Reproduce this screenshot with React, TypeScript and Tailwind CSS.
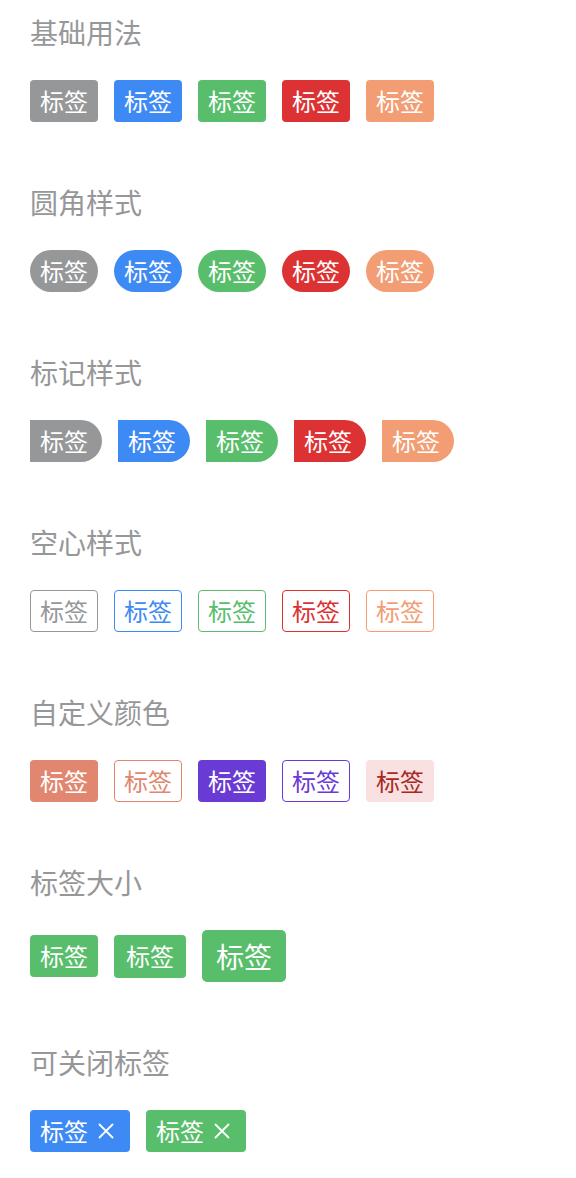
import React from 'react';

const font = { fontFamily: '"Noto Sans CJK SC", "Noto Sans", sans-serif' };

const Title: React.FC<{ children: React.ReactNode }> = ({ children }) => (
  <div className="text-[28px] leading-[40px] text-[#969799]">{children}</div>
);

const base = 'inline-flex items-center justify-center h-[42px] text-[24px] leading-none text-white';

const CloseIcon = () => (
  <svg width="16" height="16" viewBox="0 0 16 16" className="ml-[10px]">
    <path d="M1.5 1.5 L14.5 14.5 M14.5 1.5 L1.5 14.5" stroke="currentColor" strokeWidth="1.8" strokeLinecap="round" fill="none" />
  </svg>
);

const fills = ['bg-[#969799]', 'bg-[#3d8af5]', 'bg-[#58be6b]', 'bg-[#dc3233]', 'bg-[#f29d73]'];
const plains = [
  'border-[#969799] text-[#969799]',
  'border-[#3d8af5] text-[#3d8af5]',
  'border-[#58be6b] text-[#58be6b]',
  'border-[#dc3233] text-[#dc3233]',
  'border-[#f29d73] text-[#f29d73]',
];

export default function App() {
  return (
    <div className="min-h-[1178px] bg-white pl-[30px] pt-[12px]" style={font}>
      <Title>基础用法</Title>
      <div className="mt-[28px] flex gap-[16px]">
        {fills.map((c, i) => (
          <span key={i} className={`${base} w-[68px] rounded-[4px] ${c}`}>标签</span>
        ))}
      </div>

      <div className="mt-[60px]">
        <Title>圆角样式</Title>
      </div>
      <div className="mt-[28px] flex gap-[16px]">
        {fills.map((c, i) => (
          <span key={i} className={`${base} w-[68px] rounded-full ${c}`}>标签</span>
        ))}
      </div>

      <div className="mt-[60px]">
        <Title>标记样式</Title>
      </div>
      <div className="mt-[28px] flex gap-[16px]">
        {fills.map((c, i) => (
          <span key={i} className={`${base} w-[72px] pl-[10px] pr-[14px] rounded-r-full ${c}`}>标签</span>
        ))}
      </div>

      <div className="mt-[60px]">
        <Title>空心样式</Title>
      </div>
      <div className="mt-[28px] flex gap-[16px]">
        {plains.map((c, i) => (
          <span key={i} className={`inline-flex items-center justify-center h-[42px] w-[68px] text-[24px] leading-none rounded-[4px] border bg-white ${c}`}>标签</span>
        ))}
      </div>

      <div className="mt-[60px]">
        <Title>自定义颜色</Title>
      </div>
      <div className="mt-[28px] flex gap-[16px]">
        <span className={`${base} w-[68px] rounded-[4px] bg-[#e2876f]`}>标签</span>
        <span className="inline-flex items-center justify-center h-[42px] w-[68px] text-[24px] leading-none rounded-[4px] border border-[#e2876f] text-[#e2876f]">标签</span>
        <span className={`${base} w-[68px] rounded-[4px] bg-[#6a3ad4]`}>标签</span>
        <span className="inline-flex items-center justify-center h-[42px] w-[68px] text-[24px] leading-none rounded-[4px] border border-[#6a3ad4] text-[#6a3ad4]">标签</span>
        <span className="inline-flex items-center justify-center h-[42px] w-[68px] text-[24px] leading-none rounded-[4px] bg-[#fae1e1] text-[#a8281f]">标签</span>
      </div>

      <div className="mt-[60px]">
        <Title>标签大小</Title>
      </div>
      <div className="mt-[28px] flex items-center gap-[16px]">
        <span className={`${base} w-[68px] rounded-[4px] bg-[#58be6b]`}>标签</span>
        <span className="inline-flex items-center justify-center h-[43px] w-[72px] text-[24px] leading-none text-white rounded-[4px] bg-[#58be6b]">标签</span>
        <span className="inline-flex items-center justify-center h-[52px] w-[84px] text-[28px] leading-none text-white rounded-[5px] bg-[#58be6b]">标签</span>
      </div>

      <div className="mt-[60px]">
        <Title>可关闭标签</Title>
      </div>
      <div className="mt-[28px] flex gap-[16px]">
        <span className={`${base} w-[100px] pl-[10px] pr-[16px] justify-start rounded-[4px] bg-[#3d8af5]`}>
          标签
          <CloseIcon />
        </span>
        <span className={`${base} w-[100px] pl-[10px] pr-[16px] justify-start rounded-[4px] bg-[#58be6b]`}>
          标签
          <CloseIcon />
        </span>
      </div>
    </div>
  );
}
